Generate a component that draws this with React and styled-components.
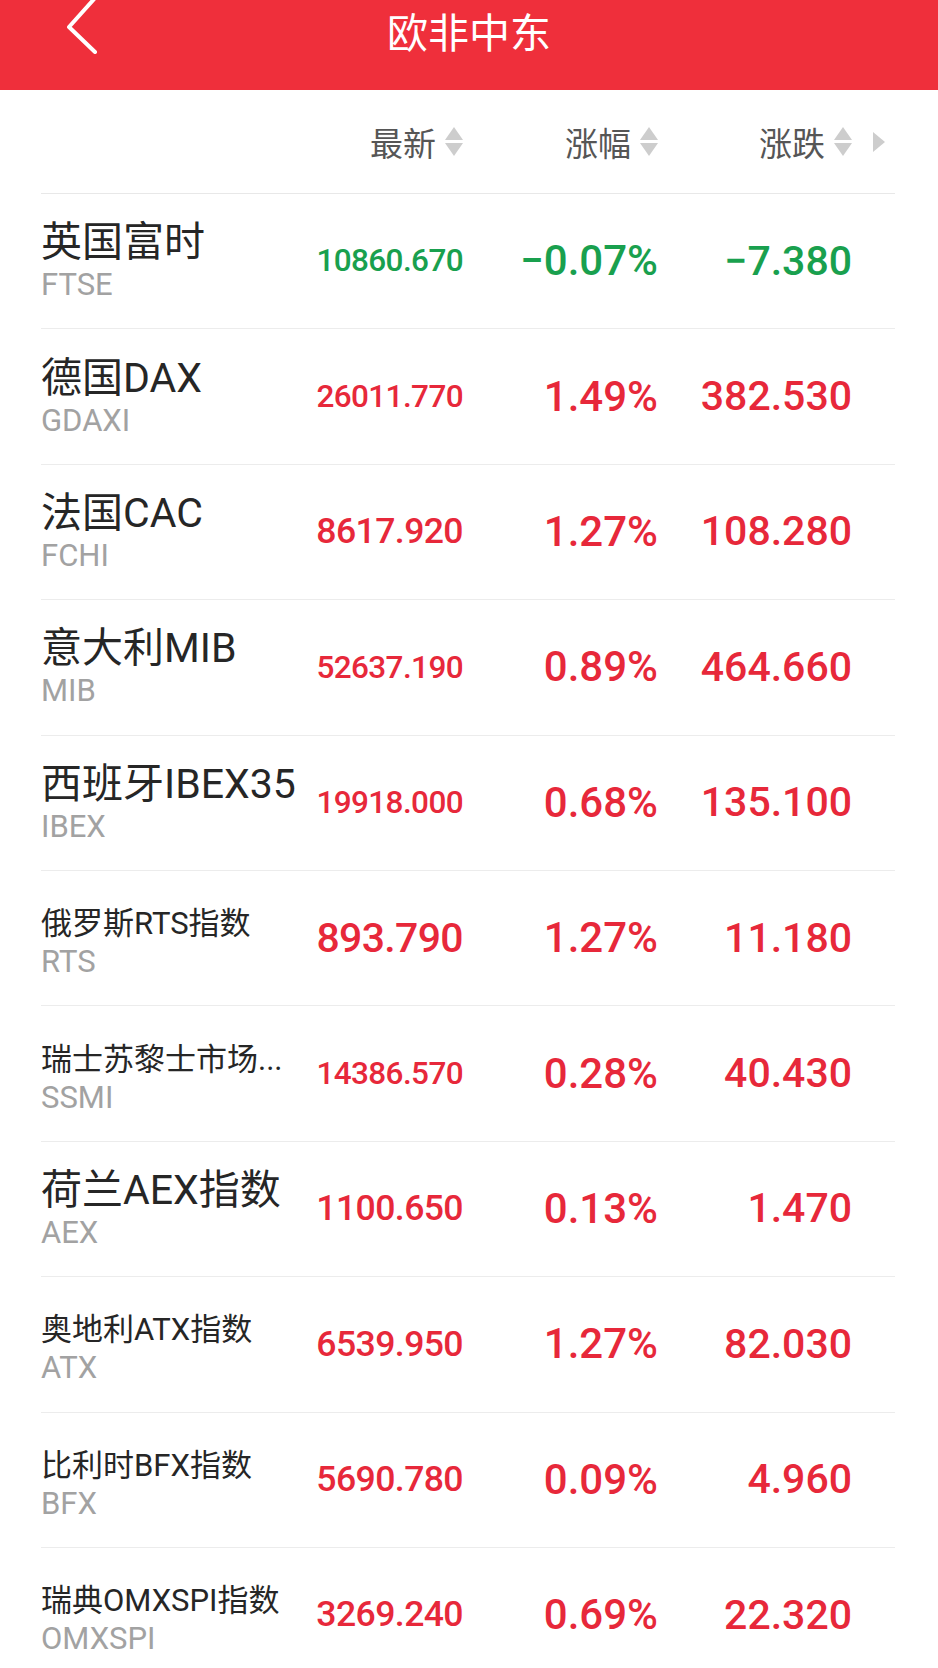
import React from 'react';
import styled, { createGlobalStyle } from 'styled-components';

const GlobalStyle = createGlobalStyle`
  html, body { margin: 0; padding: 0; overflow: hidden; background: #fff; }
  body { font-family: Roboto, "Noto Sans CJK SC", sans-serif; }
`;

const RED = '#e7283a';
const GREEN = '#19a04e';

const Page = styled.div`
  width: 938px;
  background: #fff;
`;

const TopBar = styled.header`
  height: 90px;
  background: #ef2f3b;
  display: grid;
  grid-template-columns: 1fr auto 1fr;
  align-items: start;
`;

const BackButton = styled.button`
  justify-self: start;
  margin-left: 64px;
  padding: 0;
  border: 0;
  background: none;
  height: 54px;
  display: flex;
  cursor: pointer;
`;

const Title = styled.h1`
  margin: 0;
  font: 400 41px/60px "Noto Sans CJK SC", sans-serif;
  color: #fff;
`;

const Table = styled.div`
  margin: 0 43px 0 41px;
`;

const cols = '268px 154px 195px 194px 43px';

const HeadRow = styled.div`
  display: grid;
  grid-template-columns: ${cols};
  align-items: center;
  height: 104px;
  box-sizing: border-box;
  border-bottom: 1px solid #e8e8e8;
`;

const HeadCell = styled.div`
  display: flex;
  justify-content: flex-end;
  align-items: center;
  gap: 9px;
  font: 400 33px/40px "Noto Sans CJK SC", sans-serif;
  color: #565656;
`;

const MoreCell = styled.div`
  display: flex;
  align-items: center;
  padding-left: 21px;
`;

const Row = styled.div`
  display: grid;
  grid-template-columns: ${cols};
  align-items: center;
  height: 135.4px;
  box-sizing: border-box;
  border-bottom: 1px solid #ececec;
`;

const NameBlock = styled.div`
  display: flex;
  flex-direction: column;
  min-width: 0;
`;

const NameLine = styled.div`
  height: 48px;
  display: flex;
  align-items: flex-end;
  min-width: 0;
`;

const NameText = styled.span`
  display: block;
  max-width: 100%;
  font-family: Roboto, "Noto Sans CJK SC", sans-serif;
  font-weight: 400;
  font-size: ${p => (p.$small ? 31 : 41)}px;
  line-height: ${p => (p.$small ? 38 : 48)}px;
  color: #262626;
  white-space: nowrap;
  overflow: hidden;
  text-overflow: ellipsis;
`;

const Code = styled.span`
  font: 400 31px/38px Roboto, sans-serif;
  color: #a2a2a2;
`;

const Num = styled.div`
  text-align: right;
  font-family: Roboto, sans-serif;
  font-weight: 500;
  font-size: ${p => p.$size || 41}px;
  letter-spacing: ${p => p.$tight ? '-0.6px' : '0'};
  line-height: 1;
  white-space: nowrap;
  color: ${p => (p.$down ? GREEN : RED)};
`;

const SortIcon = () => (
  <svg width="18" height="29" viewBox="0 0 18 29">
    <polygon points="9,0 18,13 0,13" fill="#cdcdcd" />
    <polygon points="0,16 18,16 9,29" fill="#cdcdcd" />
  </svg>
);

const MoreIcon = () => (
  <svg width="12" height="20" viewBox="0 0 12 20">
    <polygon points="0,0 12,10 0,20" fill="#cdcdcd" />
  </svg>
);

const BackIcon = () => (
  <svg width="36" height="54" viewBox="0 0 36 54">
    <polyline
      points="31,-2 5,27 31,52"
      fill="none"
      stroke="#fff"
      strokeWidth="4"
      strokeLinecap="round"
      strokeLinejoin="round"
    />
  </svg>
);

let ctx = null;
function fitSize(text, width, max, spacing) {
  if (typeof document === 'undefined') return max;
  if (!ctx) ctx = document.createElement('canvas').getContext('2d');
  ctx.font = '500 100px Roboto';
  const w = ctx.measureText(text).width;
  if (!w) return max;
  const avail = width + spacing * text.length;
  return Math.min(max, Math.floor((1000 * avail) / w) / 10);
}

const data = [
  { name: '英国富时', code: 'FTSE', last: '10860.670', pct: '−0.07%', chg: '−7.380', down: true },
  { name: '德国DAX', code: 'GDAXI', last: '26011.770', pct: '1.49%', chg: '382.530' },
  { name: '法国CAC', code: 'FCHI', last: '8617.920', pct: '1.27%', chg: '108.280' },
  { name: '意大利MIB', code: 'MIB', last: '52637.190', pct: '0.89%', chg: '464.660' },
  { name: '西班牙IBEX35', code: 'IBEX', last: '19918.000', pct: '0.68%', chg: '135.100' },
  { name: '俄罗斯RTS指数', code: 'RTS', last: '893.790', pct: '1.27%', chg: '11.180', small: true },
  { name: '瑞士苏黎士市场...', code: 'SSMI', last: '14386.570', pct: '0.28%', chg: '40.430', small: true },
  { name: '荷兰AEX指数', code: 'AEX', last: '1100.650', pct: '0.13%', chg: '1.470' },
  { name: '奥地利ATX指数', code: 'ATX', last: '6539.950', pct: '1.27%', chg: '82.030', small: true },
  { name: '比利时BFX指数', code: 'BFX', last: '5690.780', pct: '0.09%', chg: '4.960', small: true },
  { name: '瑞典OMXSPI指数', code: 'OMXSPI', last: '3269.240', pct: '0.69%', chg: '22.320', small: true },
];

export default function App() {
  return (
    <Page>
      <GlobalStyle />
      <TopBar>
        <BackButton aria-label="返回">
          <BackIcon />
        </BackButton>
        <Title>欧非中东</Title>
        <div />
      </TopBar>
      <Table>
        <HeadRow>
          <div />
          <HeadCell>最新<SortIcon /></HeadCell>
          <HeadCell>涨幅<SortIcon /></HeadCell>
          <HeadCell>涨跌<SortIcon /></HeadCell>
          <MoreCell><MoreIcon /></MoreCell>
        </HeadRow>
        {data.map(d => (
          <Row key={d.code}>
            <NameBlock>
              <NameLine>
                <NameText $small={d.small}>{d.name}</NameText>
              </NameLine>
              <Code>{d.code}</Code>
            </NameBlock>
            <Num $down={d.down} $tight style={{ fontSize: `${fitSize(d.last, 147, 41, 0.6)}px` }}>
              {d.last}
            </Num>
            <Num $down={d.down} $size={42}>{d.pct}</Num>
            <Num $down={d.down} $size={41}>{d.chg}</Num>
            <div />
          </Row>
        ))}
      </Table>
    </Page>
  );
}
